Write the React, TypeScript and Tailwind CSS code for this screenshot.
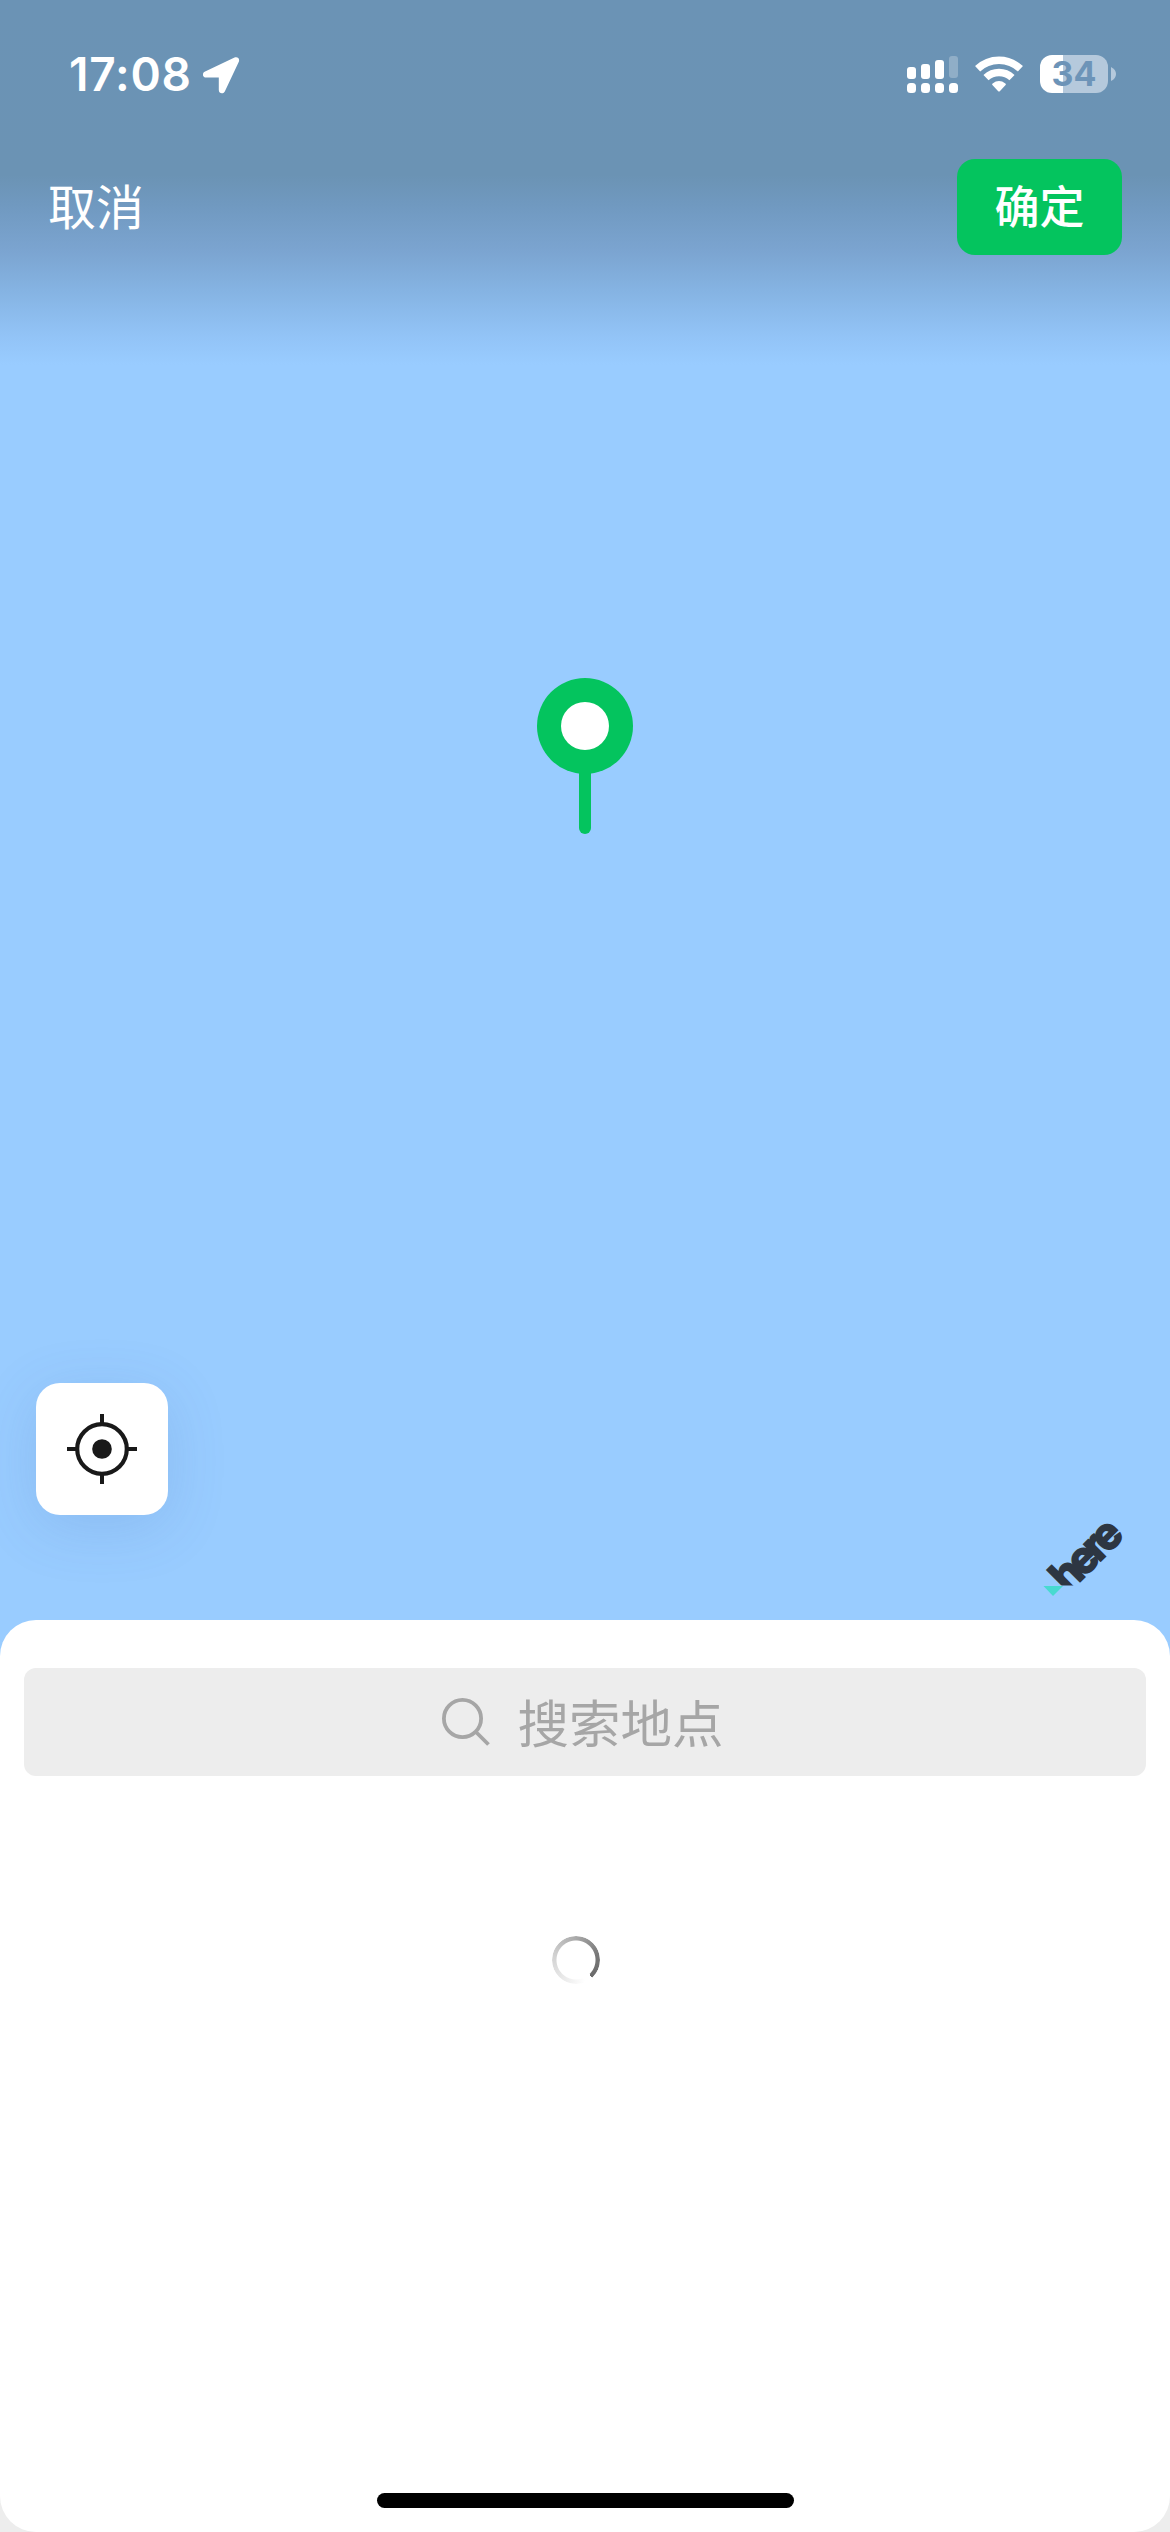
const cjk = "font-['Noto_Sans_CJK_SC',sans-serif]";

function SignalIcon() {
  const bars = [
    { x: 0, y: 11, h: 12 },
    { x: 14, y: 8, h: 15 },
    { x: 28, y: 4, h: 19 },
    { x: 42, y: 0, h: 22 },
  ];
  return (
    <svg width="51" height="37" viewBox="0 0 51 37" fill="#fff">
      {bars.map((b, i) => (
        <g key={b.x}>
          <rect x={b.x} y={b.y} width="9" height={b.h} rx="3" opacity={i === 3 ? 0.25 : 1} />
          <rect x={b.x} y="27" width="9" height="10" rx="3.5" />
        </g>
      ))}
    </svg>
  );
}

function WifiIcon() {
  return (
    <svg width="48" height="36" viewBox="0 0 48 36">
      <g fill="none" stroke="#fff" strokeWidth="7.4">
        <path d="M2.6 12.8A31 31 0 0 1 45.4 12.8" />
        <path d="M11 21.7A18.8 18.8 0 0 1 37 21.7" />
      </g>
      <path d="M17.4 29Q16.6 28.2 17.6 27.4Q24 22.6 30.4 27.4Q31.4 28.2 30.6 29L24.8 35.2Q24 36 23.2 35.2Z" fill="#fff" />
    </svg>
  );
}

function StatusBar() {
  return (
    <div className="flex h-[150px] items-center justify-between pr-[54px] pl-[69px]">
      <div className="flex items-center">
        <span className="w-[134px] pb-[2px] font-['Inter',sans-serif] text-[46px] leading-none font-semibold tracking-[0.8px] whitespace-nowrap text-white">
          17:08
        </span>
        <svg width="37" height="37" viewBox="0 0 37 37" fill="#fff">
          <path d="M1.600 14.800L31 .8C34.500-.8 37.200 1.600 35.700 5L21.800 34.400C20.200 37.400 15.800 36.600 15.800 33V20.600H3.200C-.6 20.600-1.200 16.200 1.600 14.800Z" />
        </svg>
      </div>
      <div className="flex items-center pb-[2px]">
        <SignalIcon />
        <div className="ml-[17px]">
          <WifiIcon />
        </div>
        <div className="ml-[17px] flex h-[38px] w-[68px] items-center justify-center rounded-[12px] bg-[linear-gradient(90deg,#fff_23px,#b5c9dc_23px)]">
          <span className="font-['Inter',sans-serif] text-[34px] leading-none font-bold text-[#6d94b8]">34</span>
        </div>
        <svg className="ml-[3px]" width="5" height="14" viewBox="0 0 5 14">
          <path d="M0 0Q5 2.500 5 7T0 14Z" fill="#b5c9dc" />
        </svg>
      </div>
    </div>
  );
}

function Pin() {
  return (
    <div className="flex flex-col items-center">
      <div className="flex size-24 items-center justify-center rounded-full bg-[#04c45e]">
        <div className="size-12 rounded-full bg-white" />
      </div>
      <div className="-mt-1 h-16 w-3 rounded-b-md bg-[#04c45e]" />
    </div>
  );
}

function LocateButton() {
  return (
    <button className="flex size-[132px] items-center justify-center rounded-[24px] bg-white shadow-[0_12px_60px_rgba(60,100,170,0.16)]">
      <svg width="70" height="70" viewBox="0 0 70 70" fill="none" stroke="#191919">
        <circle cx="35" cy="35" r="24.8" strokeWidth="4.2" />
        <circle cx="35" cy="35" r="9.8" fill="#191919" stroke="none" />
        <path d="M35 0v11M35 59v11M0 35h11M59 35h11" strokeWidth="4" />
      </svg>
    </button>
  );
}

function HereLogo() {
  return (
    <svg className="overflow-visible" width="90" height="90" viewBox="1040 1510 90 90">
      <text
        transform="translate(1067.500 1594) rotate(-45)"
        fontFamily="Inter, sans-serif"
        fontWeight="700"
        fontSize="43"
        textLength="82"
        lengthAdjust="spacing"
        fill="#2d3642"
        stroke="#2d3642"
        strokeWidth="2"
      >
        here
      </text>
      <path d="M1040 1585.500H1084V1600H1040Z" fill="#99ccff" />
      <path d="M1043.500 1586H1063L1053 1596Z" fill="#48dad0" />
    </svg>
  );
}

function Spinner() {
  return (
    <div className="size-12 rounded-full bg-[conic-gradient(from_137deg,#fff_0deg,#fff_20deg,#ededed_70deg,#cfcfcf_150deg,#a8a8a8_225deg,#777_300deg,#6b6b6b_360deg)] [mask:radial-gradient(circle,transparent_19px,#000_20px)]" />
  );
}

export default function App() {
  return (
    <div className="flex h-[2532px] w-[1170px] flex-col overflow-hidden bg-[#99ccff]">
      <div className="flex h-[1620px] flex-col bg-[linear-gradient(180deg,#6b93b5_0px,#6b93b4_175px,#7099c0_205px,#7ba4d0_250px,#85b3e2_290px,#92c3f6_335px,#99ccff_365px)]">
        <StatusBar />
        <header className="flex h-[114px] items-center justify-between pr-12 pl-12">
          <button className={`${cjk} pb-[7px] text-[48px] leading-none font-normal text-white`}>取消</button>
          <button
            className={`${cjk} flex h-24 w-[165px] items-center justify-center rounded-[18px] bg-[#04c45e] pb-[5px] text-[45px] leading-none font-medium text-white`}
          >
            确定
          </button>
        </header>
        <div className="mt-[414px] flex justify-center">
          <Pin />
        </div>
        <div className="mt-auto flex items-end justify-between pr-10 pb-5 pl-9">
          <div className="pb-[85px]">
            <LocateButton />
          </div>
          <HereLogo />
        </div>
      </div>

      <div className="flex-1 bg-[linear-gradient(180deg,#99ccff_50%,#ededed_50%)]">
        <div className="flex h-full flex-col items-center rounded-[36px] bg-white px-6 pt-12">
          <div className="flex h-[108px] w-full items-center justify-center rounded-[12px] bg-[#ededed] pr-[4px]">
            <svg width="48" height="48" viewBox="0 0 48 48" fill="none" stroke="#a6a6a6" strokeWidth="3.8">
              <circle cx="20.500" cy="20.500" r="18.600" />
              <path d="M34 34L46.500 46.500" />
            </svg>
            <span className={`${cjk} ml-[27px] pb-[3px] text-[51.500px] leading-none font-normal text-[#a6a6a6]`}>
              搜索地点
            </span>
          </div>
          <div className="mt-[160px] mr-[18px]">
            <Spinner />
          </div>
          <div className="mt-auto mb-6 h-[15px] w-[417px] rounded-full bg-black" />
        </div>
      </div>
    </div>
  );
}
